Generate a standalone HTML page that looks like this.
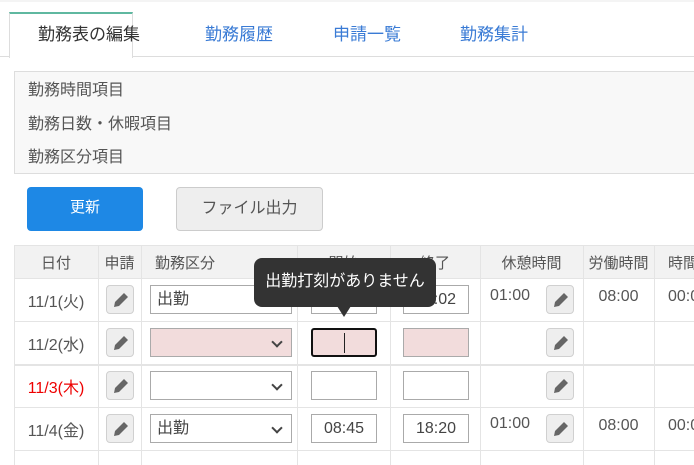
<!DOCTYPE html>
<html><head><meta charset="utf-8"><style>
*{box-sizing:border-box;margin:0;padding:0}
body{width:694px;height:461px;overflow:hidden;background:#fff;font-family:"Liberation Sans","Noto Sans CJK JP",sans-serif;color:#555;position:relative}
.abs{position:absolute}
.tab{position:absolute;top:13px;height:45px;font-size:17px;line-height:44px;color:#3a7bd5}
.panel{left:14px;top:71px;width:700px;height:103px;background:#f8f8f8;border:1px solid #ddd}
.panel div{position:absolute;left:13px;font-size:16px;color:#555}
.btn{position:absolute;top:187px;height:44px;border-radius:4px;font-size:15px;text-align:center;line-height:42px}
.vl{position:absolute;top:245px;width:1px;height:220px;background:#e4e4e4}
.hl{position:absolute;left:14px;width:690px;height:1px;background:#e4e4e4}
.cell{position:absolute;font-size:16px;text-align:center;white-space:nowrap}
.pen{position:absolute;width:28px;height:29px;border:1px solid #d0d0d0;border-radius:4px;background:#eee}
.pen svg{position:absolute;left:5px;top:5px}
.sel{position:absolute;left:150px;width:142px;height:29px;border:1px solid #aaa;background:#fff;font-size:16px;line-height:27px;padding-left:6px;color:#444}
.sel:after{content:"";position:absolute;right:10px;top:9px;width:6px;height:6px;border-right:2px solid #444;border-bottom:2px solid #444;transform:rotate(45deg)}
.inp{position:absolute;width:66px;height:29px;border:1px solid #aaa;background:#fff;font-size:16px;line-height:27px;text-align:center;color:#444}
.pink{background:#f2dcdc}
</style></head><body>
<div class="abs" style="left:0;top:0;width:694px;height:2px;background:#f4f4f4"></div>
<div class="abs" style="left:0;top:56px;width:694px;height:1px;background:#ddd"></div>
<div class="abs" style="left:9px;top:12px;width:124px;height:46px;background:#fff;border:1px solid #ddd;border-top:2px solid #5fb8a0;border-bottom:none"></div>
<div class="tab" style="left:38px;color:#333">勤務表の編集</div>
<div class="tab" style="left:205px">勤務履歴</div>
<div class="tab" style="left:333px">申請一覧</div>
<div class="tab" style="left:460px">勤務集計</div>
<div class="abs panel"><div style="top:4px">勤務時間項目</div><div style="top:38px">勤務日数・休暇項目</div><div style="top:71px">勤務区分項目</div></div>
<div class="btn" style="left:27px;width:116px;background:#1e88e5;color:#fff">更新</div>
<div class="btn" style="left:176px;width:147px;background:#eee;border:1px solid #ccc;color:#555;font-size:16px">ファイル出力</div>
<div class="abs" style="left:14px;top:245px;width:690px;height:33px;background:#f2f2f2"></div>
<div class="hl" style="top:245px"></div><div class="hl" style="top:278px"></div><div class="hl" style="top:321px"></div><div class="hl" style="top:364px;height:2px"></div><div class="hl" style="top:407px"></div><div class="hl" style="top:450px"></div>
<div class="vl" style="left:14px"></div><div class="vl" style="left:98px"></div><div class="vl" style="left:141px"></div><div class="vl" style="left:297px"></div><div class="vl" style="left:390px"></div><div class="vl" style="left:480px"></div><div class="vl" style="left:583px"></div><div class="vl" style="left:654px"></div>
<div class="cell" style="left:14px;width:84px;top:252px;font-size:15px">日付</div>
<div class="cell" style="left:98px;width:43px;top:252px;font-size:15px">申請</div>
<div class="cell" style="left:155px;top:252px;font-size:15px">勤務区分</div>
<div class="cell" style="left:297px;width:93px;top:252px;font-size:15px">開始</div>
<div class="cell" style="left:390px;width:90px;top:252px;font-size:15px">終了</div>
<div class="cell" style="left:480px;width:103px;top:252px;font-size:15px">休憩時間</div>
<div class="cell" style="left:583px;width:71px;top:252px;font-size:15px">労働時間</div>
<div class="cell" style="left:668px;top:252px;font-size:15px">時間</div>
<div class="cell" style="left:14px;width:84px;top:288px">11/1(火)</div>
<div class="cell" style="left:14px;width:84px;top:331px">11/2(水)</div>
<div class="cell" style="left:14px;width:84px;top:374px;color:#e00">11/3(木)</div>
<div class="cell" style="left:14px;width:84px;top:417px">11/4(金)</div>
<div class="pen" style="left:106px;top:285px"><svg width="18" height="18"><path d="M2 16 L3 11 L12 2 L16 6 L7 15 Z" fill="#666"/></svg></div>
<div class="pen" style="left:106px;top:328px"><svg width="18" height="18"><path d="M2 16 L3 11 L12 2 L16 6 L7 15 Z" fill="#666"/></svg></div>
<div class="pen" style="left:106px;top:371px"><svg width="18" height="18"><path d="M2 16 L3 11 L12 2 L16 6 L7 15 Z" fill="#666"/></svg></div>
<div class="pen" style="left:106px;top:414px"><svg width="18" height="18"><path d="M2 16 L3 11 L12 2 L16 6 L7 15 Z" fill="#666"/></svg></div>
<div class="pen" style="left:546px;top:285px"><svg width="18" height="18"><path d="M2 16 L3 11 L12 2 L16 6 L7 15 Z" fill="#666"/></svg></div>
<div class="pen" style="left:546px;top:328px"><svg width="18" height="18"><path d="M2 16 L3 11 L12 2 L16 6 L7 15 Z" fill="#666"/></svg></div>
<div class="pen" style="left:546px;top:371px"><svg width="18" height="18"><path d="M2 16 L3 11 L12 2 L16 6 L7 15 Z" fill="#666"/></svg></div>
<div class="pen" style="left:546px;top:414px"><svg width="18" height="18"><path d="M2 16 L3 11 L12 2 L16 6 L7 15 Z" fill="#666"/></svg></div>
<div class="sel" style="top:285px">出勤</div>
<div class="sel pink" style="top:328px"></div>
<div class="sel" style="top:371px"></div>
<div class="sel" style="top:414px">出勤</div>
<div class="inp" style="left:311px;top:285px">08:48</div>
<div class="inp" style="left:403px;top:285px">18:02</div>
<div class="inp pink" style="left:311px;top:328px;border:2px solid #111;border-radius:3px"><div style="position:absolute;left:31px;top:3px;width:1px;height:20px;background:#222"></div></div>
<div class="inp pink" style="left:403px;top:328px"></div>
<div class="inp" style="left:311px;top:371px"></div>
<div class="inp" style="left:403px;top:371px"></div>
<div class="inp" style="left:311px;top:414px">08:45</div>
<div class="inp" style="left:403px;top:414px">18:20</div>
<div class="cell" style="left:490px;top:287px">01:00</div>
<div class="cell" style="left:490px;top:415px">01:00</div>
<div class="cell" style="left:583px;width:71px;top:288px">08:00</div>
<div class="cell" style="left:583px;width:71px;top:417px">08:00</div>
<div class="cell" style="left:668px;top:288px">00:0</div>
<div class="cell" style="left:668px;top:417px">00:0</div>
<div class="abs" style="left:254px;top:258px;width:182px;height:49px;background:#333;border-radius:8px;color:#fff;font-size:16px;line-height:48px;text-align:center">出勤打刻がありません</div>
<div class="abs" style="left:337px;top:306px;width:0;height:0;border-left:7px solid transparent;border-right:7px solid transparent;border-top:11px solid #333"></div>
</body></html>
